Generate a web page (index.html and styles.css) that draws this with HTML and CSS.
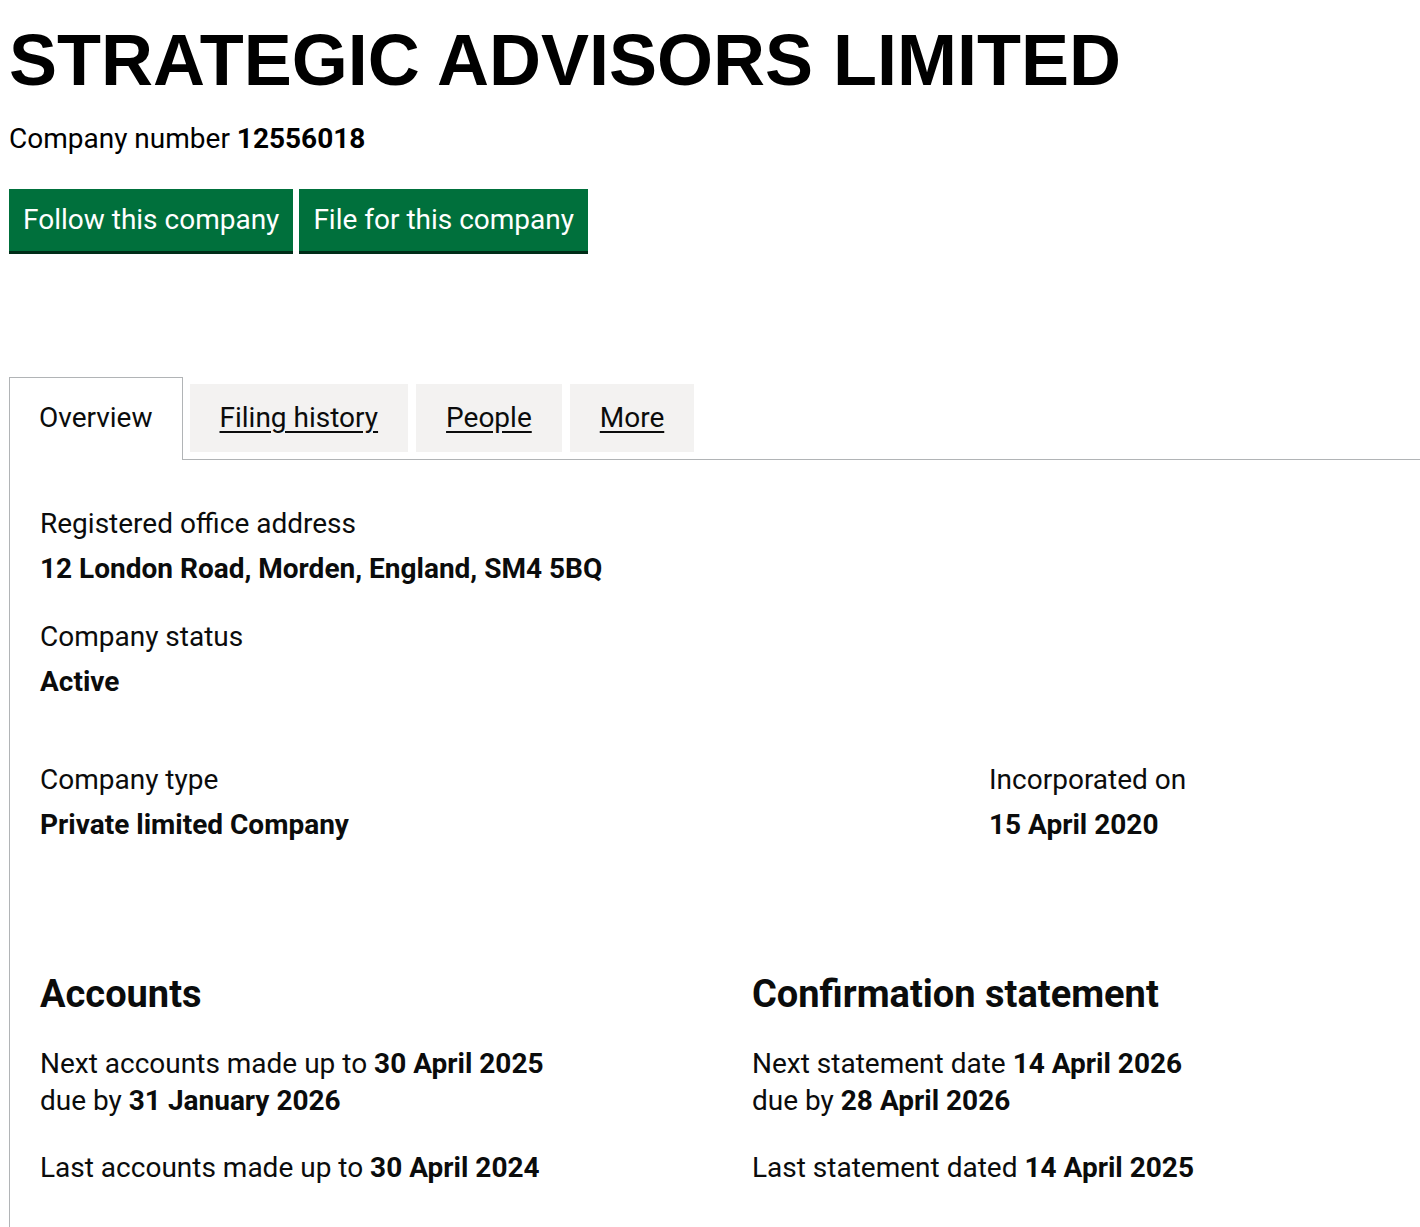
FILE: index.html
```html
<!DOCTYPE html>
<html lang="en">
<head>
    <meta charset="UTF-8">
    <meta name="viewport" content="width=device-width, initial-scale=1.0">
    <title>STRATEGIC ADVISORS LIMITED - Overview</title>
    <link rel="stylesheet" href="styles.css">
</head>
<body>
    <div class="page">
        <h1 class="company-name">STRATEGIC ADVISORS LIMITED</h1>
        <p class="company-number">Company number <strong>12556018</strong></p>

        <div class="actions">
            <a class="button" href="#">Follow this company</a>
            <a class="button" href="#">File for this company</a>
        </div>

        <ul class="tabs">
            <li class="tab active">Overview</li>
            <li class="tab"><a href="#">Filing history</a></li>
            <li class="tab"><a href="#">People</a></li>
            <li class="tab"><a href="#">More</a></li>
        </ul>

        <div class="panel">
            <dl class="field">
                <dt>Registered office address</dt>
                <dd>12 London Road, Morden, England, SM4 5BQ</dd>
            </dl>
            <dl class="field">
                <dt>Company status</dt>
                <dd>Active</dd>
            </dl>

            <div class="row row-wide">
                <dl class="field">
                    <dt>Company type</dt>
                    <dd>Private limited Company</dd>
                </dl>
                <dl class="field">
                    <dt>Incorporated on</dt>
                    <dd>15 April 2020</dd>
                </dl>
            </div>

            <div class="row row-half">
                <div class="section">
                    <h2>Accounts</h2>
                    <p>Next accounts made up to <strong>30 April 2025</strong><br>
                    due by <strong>31 January 2026</strong></p>
                    <p>Last accounts made up to <strong>30 April 2024</strong></p>
                </div>
                <div class="section">
                    <h2>Confirmation statement</h2>
                    <p>Next statement date <strong>14 April 2026</strong><br>
                    due by <strong>28 April 2026</strong></p>
                    <p>Last statement dated <strong>14 April 2025</strong></p>
                </div>
            </div>
        </div>
    </div>
</body>
</html>
```

FILE: styles.css
```css
html {
    overflow-x: hidden;
}
body {
    margin: 0;
    font-family: Roboto, "Liberation Sans", sans-serif;
    color: #0b0c0c;
}
.page {
    padding-left: 9px;
}
.company-name {
    font-family: "Liberation Sans", Arial, sans-serif;
    font-weight: 700;
    font-size: 72px;
    line-height: 1;
    margin: 24px 0 0;
    color: #000;
}
.company-number {
    font-size: 28px;
    margin: 26px 0 0;
    color: #000;
}
.company-number strong {
    font-weight: 700;
}
.actions {
    display: flex;
    gap: 6px;
    margin-top: 34px;
}
.button {
    display: block;
    background: #00703c;
    color: #fff;
    text-decoration: none;
    font-size: 28px;
    line-height: 62px;
    height: 62px;
    padding: 0 14px;
    box-shadow: 0 3px 0 #002d18;
}

/* tabs */
.tabs {
    display: flex;
    list-style: none;
    margin: 126px 0 0;
    padding: 0;
    border-bottom: 1px solid #b1b4b6;
    align-items: flex-start;
}
.tab {
    font-size: 28px;
    background: #f3f2f1;
    margin: 7px 8px 7px 0;
    height: 68px;
    line-height: 68px;
    padding: 0 30px;
}
.tab a {
    color: #0b0c0c;
    text-decoration: underline;
    text-underline-offset: 4px;
}
.tab.active {
    background: #fff;
    margin: 0 7px -1px 0;
    height: 82px;
    line-height: 80px;
    border: 1px solid #b1b4b6;
    border-bottom: 0;
    padding: 0 29px;
}

/* panel */
.panel {
    border-left: 1px solid #b1b4b6;
    padding: 46px 0 40px 30px;
    width: 1424px;
}
.field {
    margin: 0 0 32px;
}
.field dt {
    font-size: 28px;
    line-height: 36px;
}
.field dd {
    margin: 9px 0 0;
    font-size: 28px;
    line-height: 36px;
    font-weight: 700;
}
.row {
    display: grid;
}
.row-wide {
    grid-template-columns: 949px 475px;
    margin-top: 62px;
}
.row-half {
    grid-template-columns: 712px 712px;
    margin-top: 99px;
}
.section h2 {
    font-size: 38px;
    line-height: 40px;
    font-weight: 700;
    margin: 0 0 31px;
}
.section p {
    font-size: 28px;
    line-height: 37px;
    margin: 0 0 30px;
}
```
